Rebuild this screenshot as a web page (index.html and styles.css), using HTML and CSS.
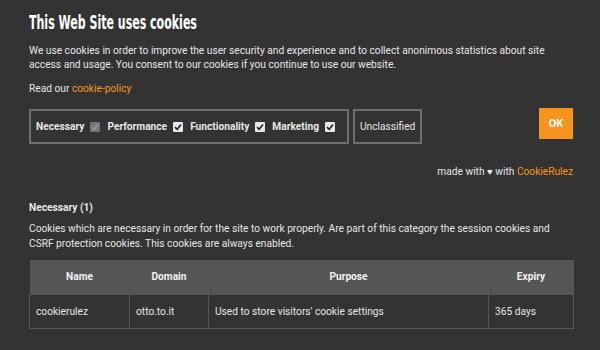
FILE: index.html
```html
<!DOCTYPE html>
<html>
<head>
<meta charset="utf-8">
<link rel="stylesheet" href="styles.css">
</head>
<body>
<div class="banner">
  <h1 class="title"><span class="title-text">This Web Site uses cookies</span></h1>
  <p class="intro">We use cookies in order to improve the user security and experience and to collect anonimous statistics about site access and usage. You consent to our cookies if you continue to use our website.</p>
  <p class="read">Read our <a class="link" href="#">cookie-policy</a></p>
  <div class="controls">
    <div class="group">
      <span class="opt">Necessary <span class="cb disabled"><svg viewBox="0 0 10 10"><path d="M2 5.2 L4.2 7.3 L8 2.6" /></svg></span></span>
      <span class="opt">Performance <span class="cb"><svg viewBox="0 0 10 10"><path d="M2 5.2 L4.2 7.3 L8 2.6" /></svg></span></span>
      <span class="opt">Functionality <span class="cb"><svg viewBox="0 0 10 10"><path d="M2 5.2 L4.2 7.3 L8 2.6" /></svg></span></span>
      <span class="opt">Marketing <span class="cb"><svg viewBox="0 0 10 10"><path d="M2 5.2 L4.2 7.3 L8 2.6" /></svg></span></span>
    </div>
    <div class="unclassified">Unclassified</div>
    <button class="ok">OK</button>
  </div>
  <p class="made">made with <span class="heart">♥</span> with <a class="link" href="#">CookieRulez</a></p>
  <h2 class="cat">Necessary (1)</h2>
  <p class="desc">Cookies which are necessary in order for the site to work properly. Are part of this category the session cookies and CSRF protection cookies. This cookies are always enabled.</p>
  <table class="tbl">
    <thead>
      <tr><th class="c-name">Name</th><th class="c-domain">Domain</th><th class="c-purpose">Purpose</th><th class="c-expiry">Expiry</th></tr>
    </thead>
    <tbody>
      <tr><td>cookierulez</td><td>otto.to.it</td><td>Used to store visitors' cookie settings</td><td>365 days</td></tr>
    </tbody>
  </table>
</div>
</body>
</html>
```

FILE: styles.css
```css
html, body {
  margin: 0;
  padding: 0;
  background: #333333;
}
body {
  font-family: Roboto, "Noto Sans", sans-serif;
  font-size: 10.2px;
  color: #e6e6e6;
}
.banner {
  padding: 11px 27px 0 29px;
}
.title {
  margin: 0;
  font-family: "DejaVu Sans Condensed", "DejaVu Sans", sans-serif;
  font-weight: bold;
  font-size: 19px;
  line-height: 22px;
  color: #ffffff;
}
.title-text {
  display: inline-block;
  transform: scaleX(0.645);
  transform-origin: left center;
  white-space: nowrap;
}
.intro {
  margin: 11px 0 0;
  line-height: 14px;
}
.read {
  margin: 10px 0 0;
  line-height: 14px;
}
.link {
  color: #f7941d;
  text-decoration: none;
}
.controls {
  display: flex;
  align-items: flex-start;
  gap: 4px;
  margin-top: 13px;
}
.group, .unclassified {
  border: 2px solid #6e6e6e;
  box-sizing: border-box;
  display: flex;
  align-items: center;
  height: 35px;
}
.group {
  padding: 0 12px 0 5px;
  gap: 7px;
  font-weight: bold;
}
.opt {
  display: flex;
  align-items: center;
  gap: 6px;
  white-space: nowrap;
}
.cb {
  width: 10px;
  height: 10px;
  background: #e8e8e8;
  border-radius: 1px;
  display: inline-block;
}
.cb svg {
  width: 10px;
  height: 10px;
  display: block;
  fill: none;
  stroke: #222;
  stroke-width: 1.6;
}
.cb.disabled {
  background: #777;
}
.cb.disabled svg {
  stroke: #999;
}
.unclassified {
  padding: 0 5px;
}
.ok {
  margin-left: auto;
  width: 34px;
  height: 31px;
  margin-top: -1px;
  background: #f7941d;
  border: none;
  color: #fff;
  font-family: Roboto, sans-serif;
  font-weight: bold;
  font-size: 11px;
  padding: 0;
}
.made {
  margin: 21px 0 0;
  text-align: right;
  line-height: 14px;
}
.heart {
  font-size: 9.5px;
}
.cat {
  margin: 22px 0 0;
  font-size: 10.2px;
  font-weight: bold;
  line-height: 14px;
}
.desc {
  margin: 6px 0 0;
  line-height: 15px;
}
.tbl {
  margin-top: 9px;
  width: 544px;
  border-collapse: collapse;
  table-layout: fixed;
}
.tbl th, .tbl td {
  box-sizing: border-box;
}
.tbl th {
  background: #555555;
  color: #f0f0f0;
  font-weight: bold;
  height: 34px;
  padding: 0 6px;
  text-align: center;
}
.tbl td {
  border: 1px solid #555555;
  height: 34px;
  padding: 0 6px;
  text-align: left;
}
.c-name { width: 100px; }
.c-domain { width: 79px; }
.c-purpose { width: 280px; }
.c-expiry { width: 85px; }
```
